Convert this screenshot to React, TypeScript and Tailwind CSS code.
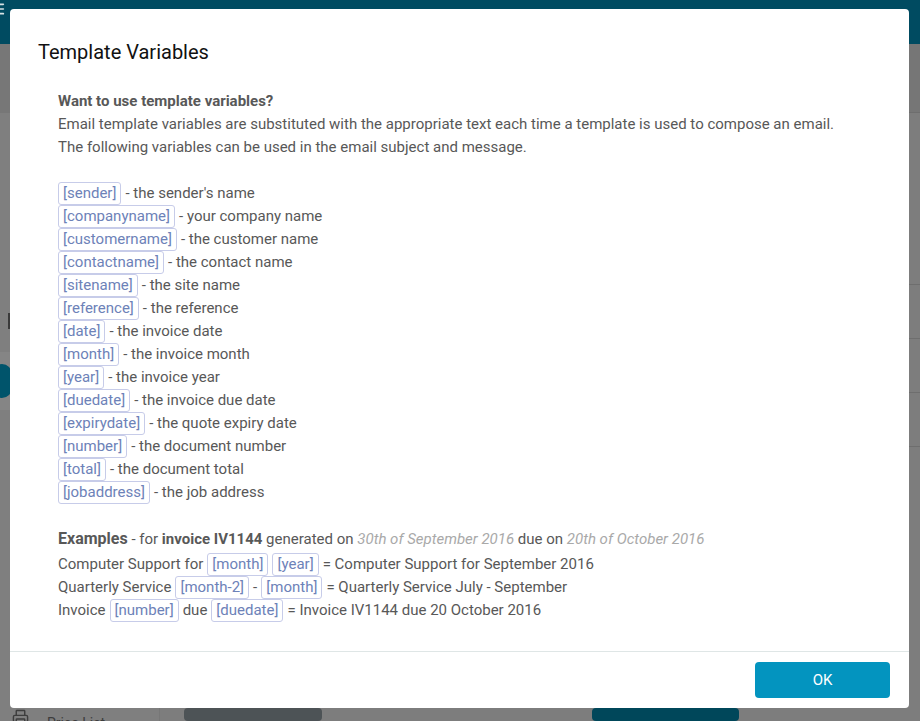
import React from 'react';
import { Menu, Printer } from 'lucide-react';

const Tag: React.FC<{ children: React.ReactNode }> = ({ children }) => (
  <span className="inline-block border border-[#c7cce9] rounded-[3px] px-[4px] leading-[21px] text-[#6d82b8]">
    {children}
  </span>
);

const variables = [
  { name: '[sender]', desc: "the sender's name" },
  { name: '[companyname]', desc: 'your company name' },
  { name: '[customername]', desc: 'the customer name' },
  { name: '[contactname]', desc: 'the contact name' },
  { name: '[sitename]', desc: 'the site name' },
  { name: '[reference]', desc: 'the reference' },
  { name: '[date]', desc: 'the invoice date' },
  { name: '[month]', desc: 'the invoice month' },
  { name: '[year]', desc: 'the invoice year' },
  { name: '[duedate]', desc: 'the invoice due date' },
  { name: '[expirydate]', desc: 'the quote expiry date' },
  { name: '[number]', desc: 'the document number' },
  { name: '[total]', desc: 'the document total' },
  { name: '[jobaddress]', desc: 'the job address' },
];

const App: React.FC = () => {
  return (
    <div className="relative w-[920px] h-[721px] overflow-hidden bg-[#7d7d7d] font-['Roboto',sans-serif]">
      {/* Dimmed app behind the dialog */}
      <div className="h-[44px] bg-[#004b61] flex items-start">
        <Menu className="w-[16px] h-[16px] text-[#d8e3e6] -ml-[10px] mt-[1px]" strokeWidth={2.5} />
      </div>
      <div className="flex h-[677px]">
        <div className="w-[160px] flex flex-col bg-[#7f7f7f] border-r border-[#777]">
          <div className="h-[69px] bg-[#777777]" />
          <div className="h-[200px]" />
          <div className="h-[16px] w-[3px] ml-[8px] bg-[#3a3a3a]" />
          <div className="h-[23px]" />
          <div className="h-[58px] bg-[#858585] flex items-center">
            <div className="w-[20px] h-[34px] rounded-full bg-[#00546b] -ml-[8px]" />
          </div>
          <div className="flex-1" />
          <div className="h-[13px] flex items-start gap-[18px] pl-[12px] text-[#3d3d3d] text-[14px] leading-[20px] overflow-hidden">
            <Printer className="w-[17px] h-[17px] mt-[1px]" />
            <span className="mt-[5px]">Price List</span>
          </div>
        </div>
        <div className="flex-1 flex flex-col">
          <div className="h-[69px] bg-[#767676] border-b border-[#6e6e6e]" />
          <div className="h-[172px] border-b border-[#6e6e6e]" />
          <div className="h-[54px] border-b border-[#6e6e6e]" />
          <div className="h-[54px] border-b border-[#6e6e6e]" />
          <div className="h-[54px] border-b border-[#6e6e6e]" />
          <div className="flex-1" />
          <div className="h-[13px] flex gap-[270px] pl-[24px]">
            <div className="w-[138px] h-[13px] rounded-[4px] bg-[#4d5356]" />
            <div className="w-[147px] h-[13px] rounded-[4px] bg-[#00475a]" />
          </div>
        </div>
      </div>

      {/* Dialog */}
      <div className="absolute left-[10px] top-[9px] w-[899px] h-[699px] bg-white rounded-[4px] flex flex-col">
        <h2 className="pl-[28px] pt-[30px] text-[20px] leading-[26px] text-[#111] font-normal">Template Variables</h2>
        <div className="flex-1 pl-[48px] pr-[40px] pt-[25px] text-[15px] leading-[23px] text-[#585858]">
          <p className="font-bold">Want to use template variables?</p>
          <p>Email template variables are substituted with the appropriate text each time a template is used to compose an email.</p>
          <p>The following variables can be used in the email subject and message.</p>
          <div className="mt-[23px]">
            {variables.map((v) => (
              <div key={v.name} className="h-[23px] flex items-center">
                <Tag>{v.name}</Tag>
                <span className="ml-[4px]">- {v.desc}</span>
              </div>
            ))}
          </div>
          <p className="mt-[23px] h-[26px] leading-[23px]">
            <span className="font-bold text-[16px]">Examples</span> - for <span className="font-bold">invoice IV1144</span> generated on{' '}
            <span className="italic text-[#a9a9a9]">30th of September 2016</span> due on{' '}
            <span className="italic text-[#a9a9a9]">20th of October 2016</span>
          </p>
          <div className="h-[23px] flex items-center gap-[4px]">
            <span>Computer Support for</span>
            <Tag>[month]</Tag>
            <Tag>[year]</Tag>
            <span>= Computer Support for September 2016</span>
          </div>
          <div className="h-[23px] flex items-center gap-[4px]">
            <span>Quarterly Service</span>
            <Tag>[month-2]</Tag>
            <span>-</span>
            <Tag>[month]</Tag>
            <span>= Quarterly Service July - September</span>
          </div>
          <div className="h-[23px] flex items-center gap-[4px]">
            <span>Invoice</span>
            <Tag>[number]</Tag>
            <span>due</span>
            <Tag>[duedate]</Tag>
            <span>= Invoice IV1144 due 20 October 2016</span>
          </div>
        </div>
        <div className="h-[57px] border-t border-[#dfe6e6] flex items-center justify-end pr-[19px]">
          <button className="w-[135px] h-[36px] rounded-[4px] bg-[#0394bf] text-white text-[15px]">OK</button>
        </div>
      </div>
    </div>
  );
};

export default App;
